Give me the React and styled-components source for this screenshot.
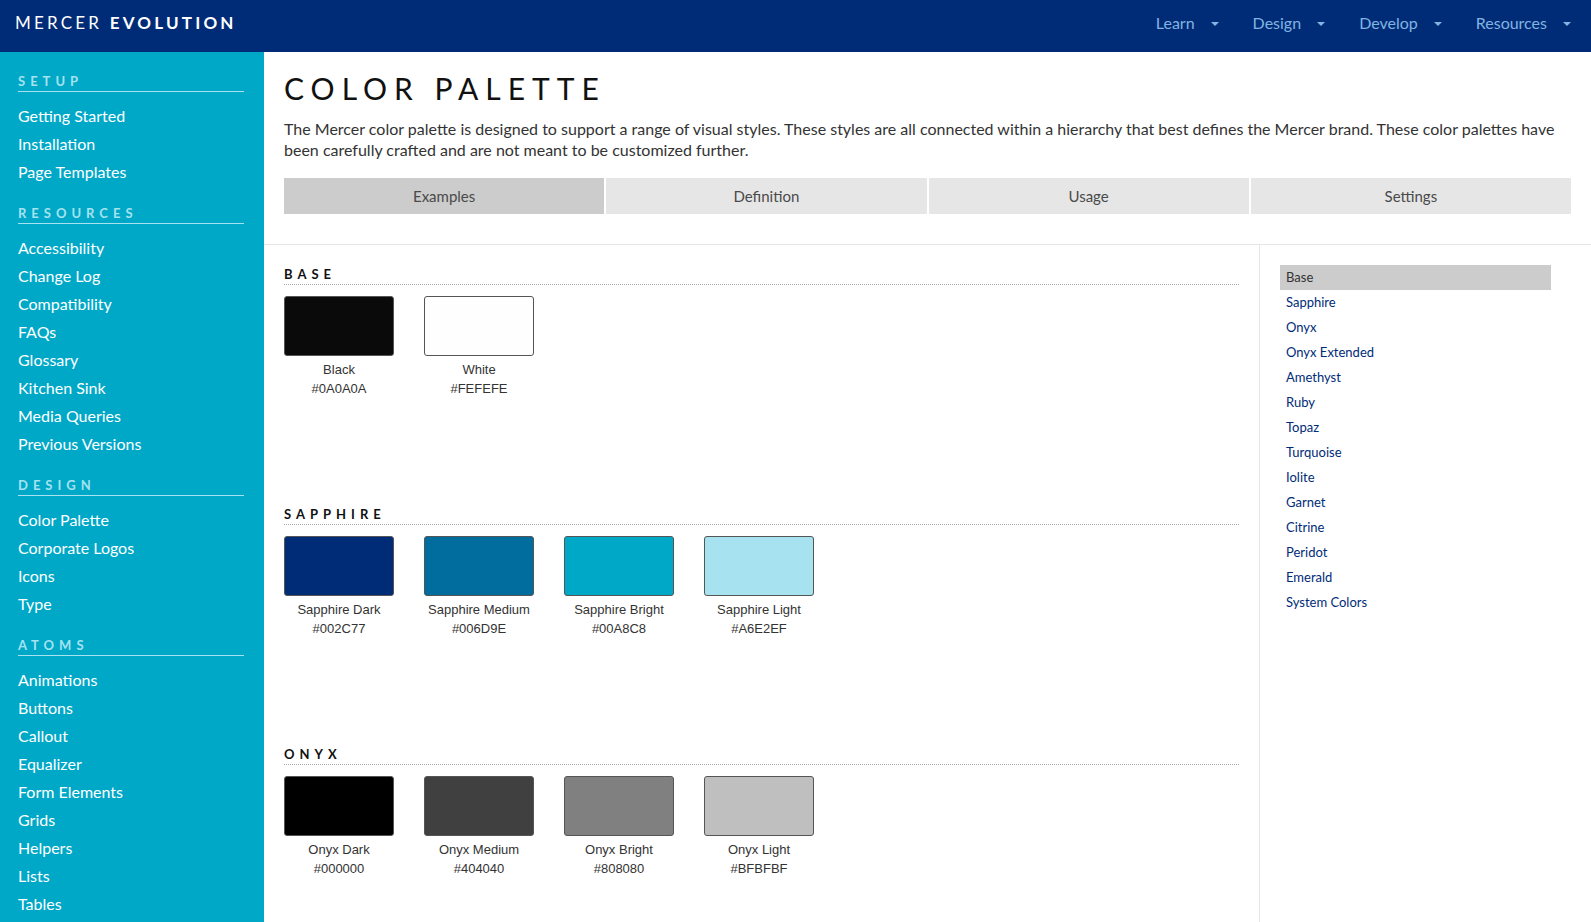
import React from 'react';
import styled, { createGlobalStyle } from 'styled-components';

const GlobalStyle = createGlobalStyle`
  html, body {
    margin: 0;
    padding: 0;
    background: #ffffff;
    font-family: 'Lato', 'Open Sans', sans-serif;
  }
  * {
    box-sizing: border-box;
  }
`;

const Page = styled.div`
  display: flex;
  flex-direction: column;
  min-height: 100vh;
`;

const Header = styled.header`
  height: 52px;
  background-color: #002c77;
  display: flex;
  align-items: center;
  justify-content: space-between;
  padding: 0 20px 6px 15px;
  flex-shrink: 0;
`;

const Logo = styled.div`
  color: #ffffff;
  font-size: 17px;
  line-height: 20px;
  letter-spacing: 3.2px;
  font-weight: 400;
  white-space: nowrap;

  b {
    font-weight: 700;
  }
`;

const Nav = styled.nav`
  display: flex;
  align-items: center;
  gap: 34px;
`;

const NavItem = styled.a`
  display: flex;
  align-items: center;
  color: #80b4e2;
  font-size: 16px;
  line-height: 20px;
  text-decoration: none;
  cursor: pointer;
`;

const Caret = styled.span`
  display: inline-block;
  width: 0;
  height: 0;
  margin: 2px 0 0 16px;
  border-left: 4px solid transparent;
  border-right: 4px solid transparent;
  border-top: 4px solid #80b4e2;
`;

const Body = styled.div`
  display: flex;
  flex: 1;
`;

const Sidebar = styled.aside`
  width: 264px;
  flex-shrink: 0;
  background-color: #00a8c8;
  padding: 21px 20px 0 18px;
`;

const SideSection = styled.div`
  margin-bottom: 19px;
`;

const SideHeading = styled.div`
  color: #a6e2ef;
  font-size: 13px;
  font-weight: 700;
  letter-spacing: 5px;
  line-height: 16px;
  padding-bottom: 2px;
  border-bottom: 1px solid #a6e2ef;
  margin-bottom: 10px;
`;

const SideLink = styled.a`
  display: block;
  color: #ffffff;
  font-size: 16px;
  line-height: 28px;
  text-decoration: none;
  cursor: pointer;
`;

const Main = styled.main`
  flex: 1;
  min-width: 0;
  background: #ffffff;
`;

const Intro = styled.div`
  padding: 0 20px;
`;

const Title = styled.h1`
  margin: 0;
  padding-top: 18px;
  font-size: 30px;
  line-height: 36px;
  font-weight: 400;
  letter-spacing: 7px;
  color: #111111;
`;

const Lead = styled.p`
  margin: 12px 0 0;
  font-size: 16px;
  line-height: 21px;
  color: #333333;
`;

const Tabs = styled.div`
  display: grid;
  grid-template-columns: repeat(4, 1fr);
  gap: 2px;
  margin-top: 18px;
`;

const Tab = styled.div`
  height: 36px;
  display: flex;
  align-items: center;
  justify-content: center;
  font-size: 15px;
  color: #4a4a4a;
  background-color: ${(p) => (p.$active ? '#cccccc' : '#e6e6e6')};
  cursor: pointer;
`;

const Divider = styled.div`
  height: 1px;
  background: #e6e6e6;
  margin-top: 30px;
`;

const Columns = styled.div`
  display: flex;
`;

const Content = styled.div`
  flex: 1;
  min-width: 0;
  padding: 0 20px;
  border-right: 1px solid #e6e6e6;
`;

const PaletteSection = styled.section`
  height: 240px;
  padding-top: 21px;
`;

const SectionTitle = styled.h2`
  margin: 0;
  font-size: 13px;
  line-height: 16px;
  font-weight: 700;
  letter-spacing: 5px;
  color: #111111;
  padding-bottom: 2px;
  border-bottom: 1px dotted #aaaaaa;
`;

const SwatchRow = styled.div`
  display: flex;
  gap: 30px;
  margin-top: 11px;
`;

const SwatchItem = styled.div`
  width: 110px;
  text-align: center;
`;

const Chip = styled.div`
  height: 60px;
  border: 1px solid #555555;
  border-radius: 3px;
  background-color: ${(p) => p.$color};
  margin-bottom: 4px;
`;

const SwatchText = styled.div`
  font-family: 'Liberation Sans', Arial, sans-serif;
  font-size: 13px;
  line-height: 19px;
  color: #333333;
`;

const SubNav = styled.div`
  width: 331px;
  flex-shrink: 0;
  padding: 20px 40px 0 20px;
`;

const SubNavItem = styled.a`
  display: block;
  height: 25px;
  line-height: 25px;
  padding-left: 6px;
  font-size: 13px;
  text-decoration: none;
  cursor: pointer;
  color: ${(p) => (p.$active ? '#333333' : '#002c77')};
  background-color: ${(p) => (p.$active ? '#cccccc' : 'transparent')};
`;

const sideNav = [
  { title: 'SETUP', links: ['Getting Started', 'Installation', 'Page Templates'] },
  {
    title: 'RESOURCES',
    links: [
      'Accessibility',
      'Change Log',
      'Compatibility',
      'FAQs',
      'Glossary',
      'Kitchen Sink',
      'Media Queries',
      'Previous Versions',
    ],
  },
  { title: 'DESIGN', links: ['Color Palette', 'Corporate Logos', 'Icons', 'Type'] },
  {
    title: 'ATOMS',
    links: [
      'Animations',
      'Buttons',
      'Callout',
      'Equalizer',
      'Form Elements',
      'Grids',
      'Helpers',
      'Lists',
      'Tables',
    ],
  },
];

const palettes = [
  {
    title: 'BASE',
    colors: [
      { name: 'Black', hex: '#0A0A0A' },
      { name: 'White', hex: '#FEFEFE' },
    ],
  },
  {
    title: 'SAPPHIRE',
    colors: [
      { name: 'Sapphire Dark', hex: '#002C77' },
      { name: 'Sapphire Medium', hex: '#006D9E' },
      { name: 'Sapphire Bright', hex: '#00A8C8' },
      { name: 'Sapphire Light', hex: '#A6E2EF' },
    ],
  },
  {
    title: 'ONYX',
    colors: [
      { name: 'Onyx Dark', hex: '#000000' },
      { name: 'Onyx Medium', hex: '#404040' },
      { name: 'Onyx Bright', hex: '#808080' },
      { name: 'Onyx Light', hex: '#BFBFBF' },
    ],
  },
];

const subNav = [
  'Base',
  'Sapphire',
  'Onyx',
  'Onyx Extended',
  'Amethyst',
  'Ruby',
  'Topaz',
  'Turquoise',
  'Iolite',
  'Garnet',
  'Citrine',
  'Peridot',
  'Emerald',
  'System Colors',
];

function App() {
  return (
    <>
      <GlobalStyle />
      <Page>
        <Header>
          <Logo>
            MERCER <b>EVOLUTION</b>
          </Logo>
          <Nav>
            {['Learn', 'Design', 'Develop', 'Resources'].map((item) => (
              <NavItem key={item}>
                {item}
                <Caret />
              </NavItem>
            ))}
          </Nav>
        </Header>
        <Body>
          <Sidebar>
            {sideNav.map((section) => (
              <SideSection key={section.title}>
                <SideHeading>{section.title}</SideHeading>
                {section.links.map((link) => (
                  <SideLink key={link}>{link}</SideLink>
                ))}
              </SideSection>
            ))}
          </Sidebar>
          <Main>
            <Intro>
              <Title>COLOR PALETTE</Title>
              <Lead>
                The Mercer color palette is designed to support a range of visual styles. These
                styles are all connected within a hierarchy that best defines the Mercer brand.
                These color palettes have been carefully crafted and are not meant to be
                customized further.
              </Lead>
              <Tabs>
                <Tab $active>Examples</Tab>
                <Tab>Definition</Tab>
                <Tab>Usage</Tab>
                <Tab>Settings</Tab>
              </Tabs>
            </Intro>
            <Divider />
            <Columns>
              <Content>
                {palettes.map((palette) => (
                  <PaletteSection key={palette.title}>
                    <SectionTitle>{palette.title}</SectionTitle>
                    <SwatchRow>
                      {palette.colors.map((c) => (
                        <SwatchItem key={c.hex}>
                          <Chip $color={c.hex} />
                          <SwatchText>{c.name}</SwatchText>
                          <SwatchText>{c.hex}</SwatchText>
                        </SwatchItem>
                      ))}
                    </SwatchRow>
                  </PaletteSection>
                ))}
              </Content>
              <SubNav>
                {subNav.map((item, i) => (
                  <SubNavItem key={item} $active={i === 0}>
                    {item}
                  </SubNavItem>
                ))}
              </SubNav>
            </Columns>
          </Main>
        </Body>
      </Page>
    </>
  );
}

export default App;
